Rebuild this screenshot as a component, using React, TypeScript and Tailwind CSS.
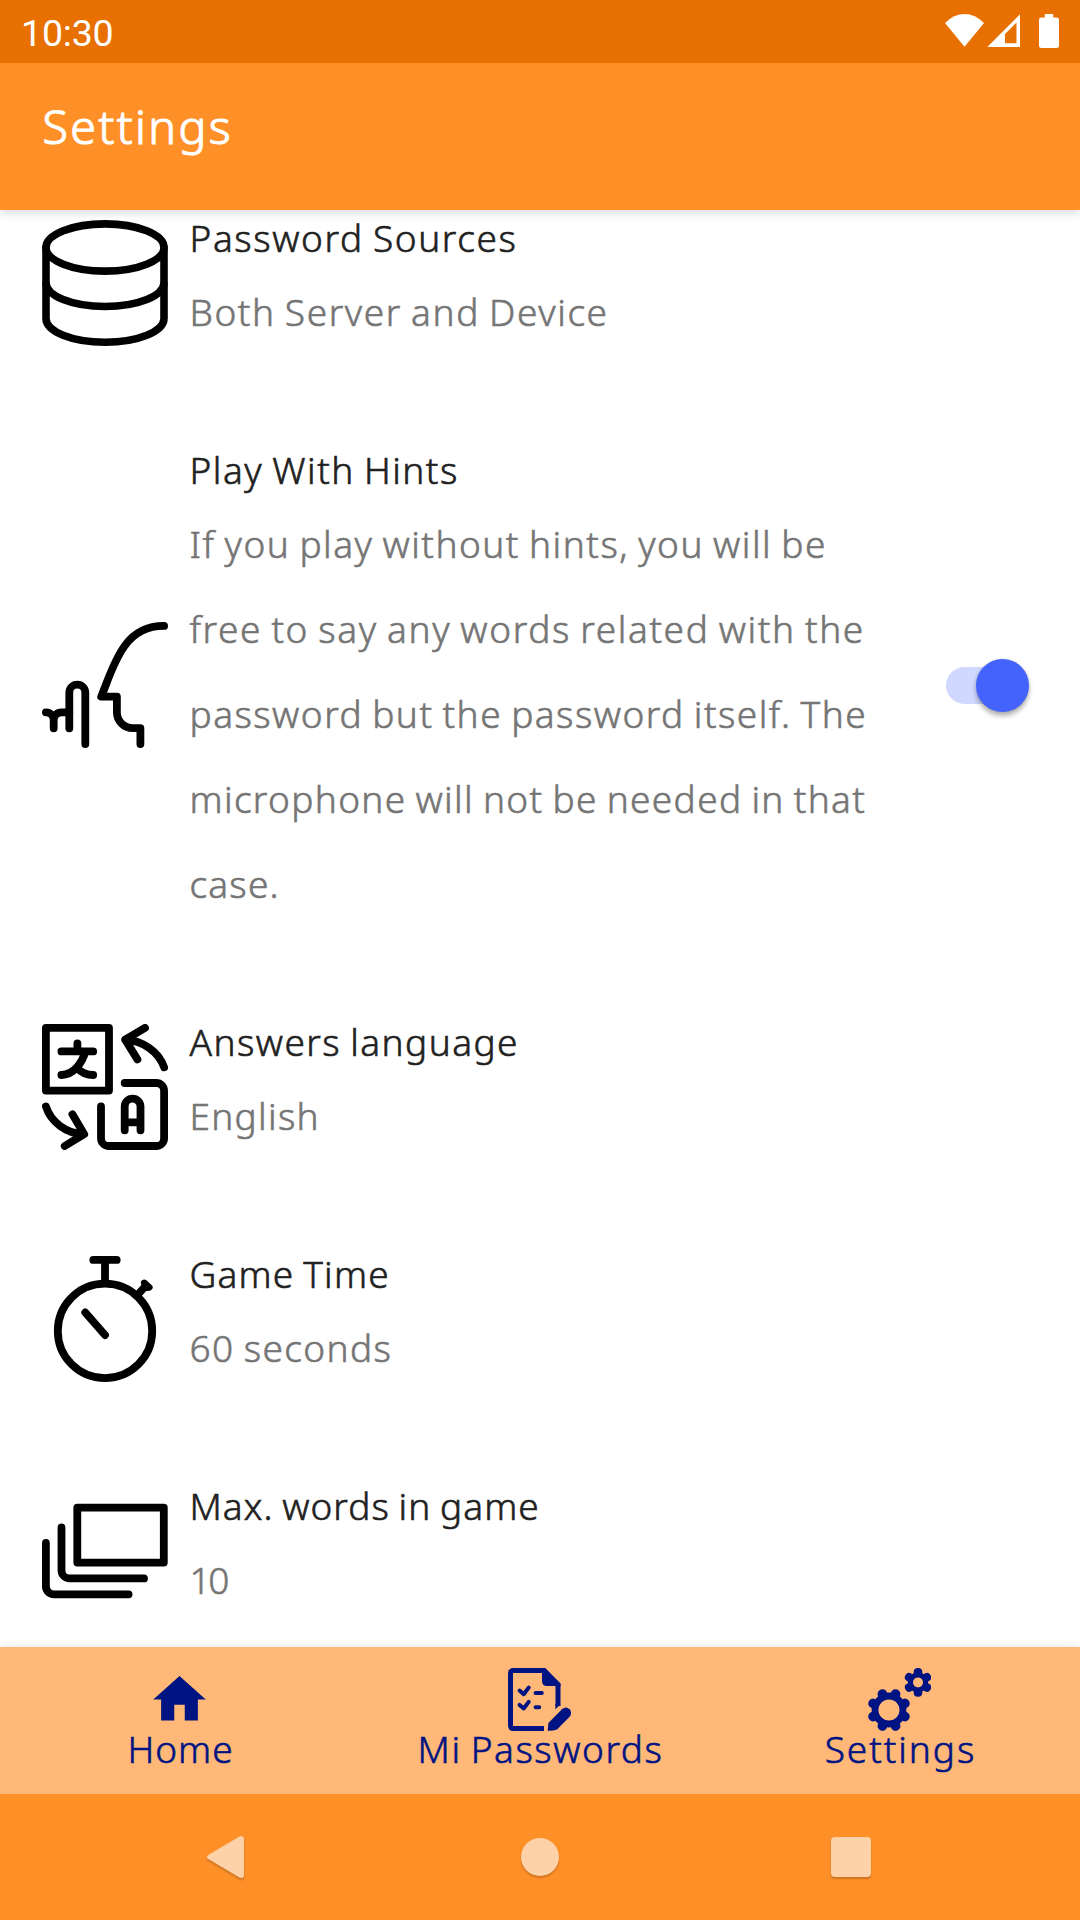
import type { ReactNode } from "react";

type Line = { text: string; tracking: string };

type Setting = {
  title: Line;
  detail: Line[];
  icon: ReactNode;
  toggled?: boolean;
};

function OutlineIcon({ children }: { children: ReactNode }) {
  return (
    <svg
      viewBox="0 0 126 126"
      className="size-[126px] shrink-0"
      fill="none"
      stroke="#000"
      strokeWidth="7.8"
      strokeLinecap="round"
      strokeLinejoin="round"
    >
      {children}
    </svg>
  );
}

const settings: Setting[] = [
  {
    title: { text: "Password Sources", tracking: "tracking-[1.6px]" },
    detail: [{ text: "Both Server and Device", tracking: "tracking-[1.58px]" }],
    icon: (
      <OutlineIcon>
        <ellipse cx="63" cy="27.5" rx="59" ry="23.6" strokeWidth="7.6" />
        <path strokeWidth="7.6" d="M4 27.5V98.5C4 111.5 30 122.2 63 122.2S122 111.5 122 98.5V27.5" />
        <path strokeWidth="7.6" strokeLinecap="butt" d="M4 62.5C4 76 30 86.5 63 86.5S122 76 122 62.5" />
      </OutlineIcon>
    ),
  },
  {
    title: { text: "Play With Hints", tracking: "tracking-[1.5px]" },
    detail: [
      { text: "If you play without hints, you will be", tracking: "tracking-[1.5px]" },
      { text: "free to say any words related with the", tracking: "tracking-[1.63px]" },
      { text: "password but the password itself. The", tracking: "tracking-[1.48px]" },
      { text: "microphone will not be needed in that", tracking: "tracking-[1.35px]" },
      { text: "case.", tracking: "tracking-[1.2px]" },
    ],
    toggled: true,
    icon: (
      <OutlineIcon>
        <path d="M3.9 90.3A7.8 7.8 0 0 1 11.7 98.1V106.3M11.7 98.1A7.8 7.8 0 0 1 19.7 90.3H27.3" />
        <path d="M27.3 106.3V70.7A8 8 0 0 1 43.3 70.7V122" />
        <path d="M122.1 3.9C106 3.9 92 11 83 23.5C72 38 66.5 57 59.2 74.7H74.9V90.3A15.8 15.8 0 0 0 90.7 106.1H98.4V122" />
      </OutlineIcon>
    ),
  },
  {
    title: { text: "Answers language", tracking: "tracking-[1.45px]" },
    detail: [{ text: "English", tracking: "tracking-[1.3px]" }],
    icon: (
      <OutlineIcon>
        <path d="M3.9 3.9H67V66.6H3.9Z" />
        <path d="M35.4 19.4V27.4M19.4 27.4H51.2M43.4 27.4C40.5 38 32 51 19.4 51M35.4 44.3C39.5 48.7 45 51 51.2 51" />
        <path d="M103 3.9L83.2 15.6L95.4 35.4M83.2 15.6C100 16.5 116.5 27 122.1 43.3" />
        <path d="M3.9 82.4C8.5 97.5 24 109.8 42 110.2M30.4 90.3L42.2 110.2L22.7 122" />
        <path d="M82.7 59H114.3A7.8 7.8 0 0 1 122.1 66.8V114.2A7.8 7.8 0 0 1 114.3 122H66.8A7.8 7.8 0 0 1 59 114.2V82.4" />
        <path d="M82.7 106.3V82.6A7.9 7.9 0 0 1 98.5 82.6V106.3M82.7 98.3H98.5" />
      </OutlineIcon>
    ),
  },
  {
    title: { text: "Game Time", tracking: "tracking-[1.2px]" },
    detail: [{ text: "60 seconds", tracking: "tracking-[1.42px]" }],
    icon: (
      <OutlineIcon>
        <circle cx="63" cy="74.9" r="47.2" />
        <path d="M51.3 3.9H74.7M63 3.9V27M43.3 56.5L63 79" />
        <path strokeLinecap="butt" d="M95.5 39L104.5 29" />
        <path strokeWidth="6.6" d="M102.2 26.8L107.3 31.4L104 31.8Z" fill="#000" />
      </OutlineIcon>
    ),
  },
  {
    title: { text: "Max. words in game", tracking: "tracking-[1.06px]" },
    detail: [{ text: "10", tracking: "tracking-[-2.5px]" }],
    icon: (
      <OutlineIcon>
        <path d="M35.3 19.6H121.8V74.6H35.3Z" />
        <path d="M19.5 39.4V82.5A8 8 0 0 0 27.5 90.4H102" />
        <path d="M3.9 55V98.3A8 8 0 0 0 11.9 106.3H86.6" />
      </OutlineIcon>
    ),
  },
];

function Toggle() {
  return (
    <div className="relative h-[37px] w-[82px] rounded-full bg-[#d0d8ff]">
      <div className="absolute -top-[8px] left-[30px] size-[53px] rounded-full bg-[#4462fc] shadow-[0_4px_5px_rgba(0,0,0,0.3),0_0_3px_rgba(0,0,0,0.12)]" />
    </div>
  );
}

function SettingRow({ setting }: { setting: Setting }) {
  return (
    <div className="flex items-center py-[38.5px] pl-[42px]">
      {setting.icon}
      <div className="ml-[21.5px] w-[756.5px] pb-[7px] text-[37px] font-light [word-spacing:-2px]">
        <div className={`whitespace-nowrap leading-[63px] text-[#212121] [-webkit-text-stroke:0.6px] ${setting.title.tracking}`}>
          {setting.title.text}
        </div>
        {setting.detail.map((line) => (
          <div
            key={line.text}
            className={`whitespace-nowrap leading-[85px] text-[#757575] [-webkit-text-stroke:0.6px] ${line.tracking}`}
          >
            {line.text}
          </div>
        ))}
      </div>
      {setting.toggled && <Toggle />}
    </div>
  );
}

function HomeIcon() {
  return (
    <svg viewBox="0 0 24 24" className="size-[63px]" fill="#001382">
      <path d="M10 20v-6h4v6h5v-8h3L12 3 2 12h3v8z" />
    </svg>
  );
}

function ChecklistIcon() {
  return (
    <svg viewBox="0 0 63 63" className="size-[63px]" fill="none" stroke="#001382">
      <path strokeWidth="5" d="M36 60.4H5.5Q2.5 60.4 2.5 57.4V5.5Q2.5 2.5 5.5 2.5H36L50 17.5V38" />
      <path fill="#001382" stroke="none" d="M34 1L37 0L52.6 15.5V18H39Q34 18 34 13ZM47.4 36L52.6 36L47.4 41.5Z" />
      <path
        strokeWidth="4"
        strokeLinecap="round"
        strokeLinejoin="round"
        d="M11.6 22.6L15.7 26.2L20.7 19.6M27.6 25H33.8M11.6 36.9L15.7 40.5L20.7 33.9M27.6 39.3H31.2"
      />
      <path fill="#001382" stroke="none" d="M39.7 62.8L40.4 55L54 41.2Q58 37.8 61.6 41.2Q64.6 45 61.4 49L49 61.4Q45 63 39.7 62.8Z" />
    </svg>
  );
}

function GearsIcon() {
  const large = [22.5, 67.5, 112.5, 157.5, 202.5, 247.5, 292.5, 337.5];
  const small = [0, 60, 120, 180, 240, 300];
  return (
    <svg viewBox="0 0 63 63" className="size-[63px]" fill="#001382">
      <circle cx="21" cy="42" r="14" fill="none" stroke="#001382" strokeWidth="6.8" />
      {large.map((angle) => (
        <rect key={angle} x="16.2" y="20" width="9.6" height="11" rx="4.6" transform={`rotate(${angle} 21 42)`} />
      ))}
      <circle cx="50" cy="14.4" r="7.6" fill="none" stroke="#001382" strokeWidth="5.2" />
      {small.map((angle) => (
        <rect key={angle} x="45.7" y="0" width="8.6" height="9" rx="4.1" transform={`rotate(${angle} 50 14.4)`} />
      ))}
    </svg>
  );
}

const tabs = [
  { label: "Home", tracking: "tracking-[1px]", icon: <HomeIcon /> },
  { label: "Mi Passwords", tracking: "tracking-[1.55px]", icon: <ChecklistIcon /> },
  { label: "Settings", tracking: "tracking-[1.95px]", icon: <GearsIcon /> },
];

export default function App() {
  return (
    <div className="flex h-[1920px] w-[1080px] flex-col overflow-hidden bg-white font-['Noto_Sans',sans-serif]">
      <div className="relative z-20 flex h-[63px] shrink-0 items-start justify-between bg-[#e87000] pl-[21px] text-white">
        <span className="pt-[3px] font-['Roboto',sans-serif] text-[37.5px] leading-[60px] tracking-[-0.2px]">10:30</span>
        <svg viewBox="0 0 120 34" className="mr-[18.5px] mt-[14px] h-[34px] w-[120px]" fill="#fff">
          <path d="M3 9Q12 0 22.5 0T42 9L22.5 32.7Z" />
          <path fillRule="evenodd" d="M45.3 33L78 .3V33ZM63 20V29.3H74.5V8.6Z" />
          <path d="M102.8 0h8.4v3.4h3.5q2.3 0 2.3 2.3v26q0 2.3-2.3 2.3H99.3q-2.3 0-2.3-2.3v-26q0-2.3 2.3-2.3h3.5z" />
        </svg>
      </div>

      <header className="relative z-10 flex h-[147px] shrink-0 bg-[#ff9028] pl-[42.5px] pt-[33px] shadow-[0_2px_10px_rgba(0,0,0,0.16)]">
        <h1 className="text-[46.5px] font-light leading-[60px] tracking-[2.45px] text-white [-webkit-text-stroke:1.2px]">Settings</h1>
      </header>

      <main className="min-h-0 flex-1 overflow-hidden">
        <div className="-mt-[43px]">
          {settings.map((setting) => (
            <SettingRow key={setting.title.text} setting={setting} />
          ))}
        </div>
      </main>

      <nav className="relative z-10 grid h-[147px] shrink-0 grid-cols-3 bg-[#ffb877] shadow-[0_0_10px_rgba(0,0,0,0.1)]">
        {tabs.map((tab) => (
          <div key={tab.label} className="flex flex-col items-center pr-px pt-[21px]">
            {tab.icon}
            <span
              className={`-mt-[7px] pl-[2px] text-[37px] font-light leading-[50px] text-[#001382] [word-spacing:-2px] [-webkit-text-stroke:0.6px] ${tab.tracking}`}
            >
              {tab.label}
            </span>
          </div>
        ))}
      </nav>

      <div className="relative z-20 flex h-[126px] shrink-0 items-center bg-[#ff9028] pl-[206px]">
        <svg viewBox="0 0 38 42" className="h-[42px] w-[38px] overflow-visible drop-shadow-[0_2px_1px_rgba(0,0,0,0.2)]" fill="#fed2a9">
          <path d="M1.8 19.2L33.5 .5Q38 -1 38 3.5V38.5Q38 43 33.5 41.5L1.8 22.8Q0 21 1.8 19.2Z" />
        </svg>
        <div className="ml-[277px] size-[38px] rounded-full bg-[#fed2a9] shadow-[0_2px_2px_rgba(0,0,0,0.2)]" />
        <div className="ml-[272px] size-[40px] rounded-[4px] bg-[#fed2a9] shadow-[0_2px_2px_rgba(0,0,0,0.2)]" />
      </div>
    </div>
  );
}
